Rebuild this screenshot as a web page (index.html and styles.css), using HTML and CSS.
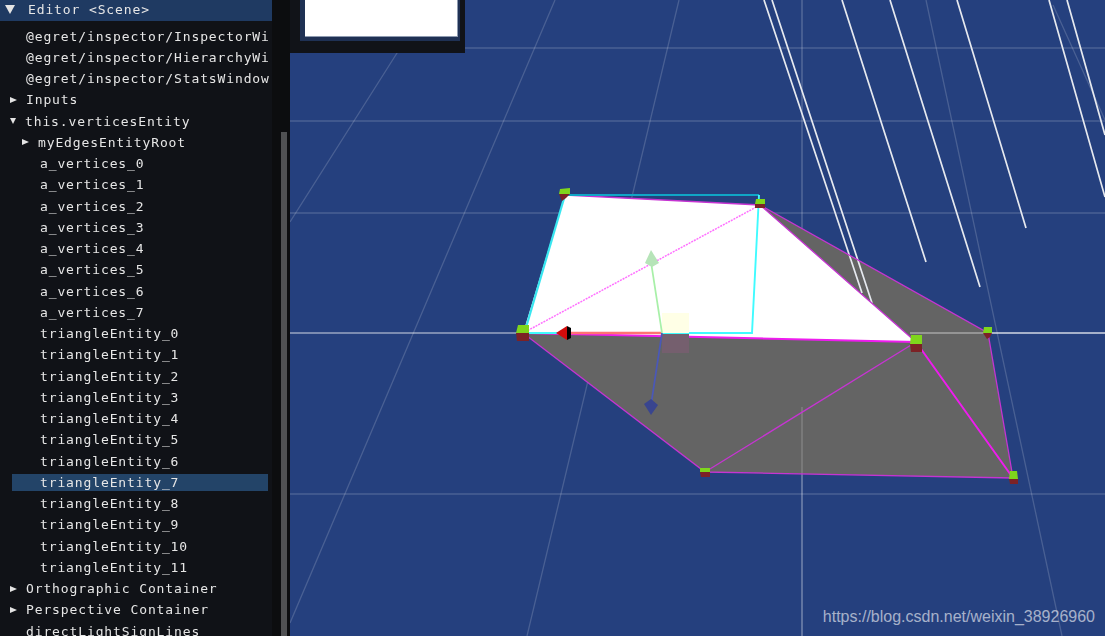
FILE: index.html
```html
<!DOCTYPE html>
<html lang="en">
<head>
<meta charset="utf-8">
<title>Editor &lt;Scene&gt;</title>
<link rel="stylesheet" href="styles.css">
</head>
<body>
<div class="app">
  <aside class="sidebar">
    <div class="tree">
      <div class="header"><i class="arrow-big"></i><span>Editor &lt;Scene&gt;</span></div>
      <div class="rows">
        <div class="row leaf1">@egret/inspector/InspectorWi</div>
        <div class="row leaf1">@egret/inspector/HierarchyWi</div>
        <div class="row leaf1">@egret/inspector/StatsWindow</div>
        <div class="row branch1"><i class="arrow-right"></i>Inputs</div>
        <div class="row branch1"><i class="arrow-down"></i>this.verticesEntity</div>
        <div class="row branch2"><i class="arrow-right"></i>myEdgesEntityRoot</div>
        <div class="row leaf2">a_vertices_0</div>
        <div class="row leaf2">a_vertices_1</div>
        <div class="row leaf2">a_vertices_2</div>
        <div class="row leaf2">a_vertices_3</div>
        <div class="row leaf2">a_vertices_4</div>
        <div class="row leaf2">a_vertices_5</div>
        <div class="row leaf2">a_vertices_6</div>
        <div class="row leaf2">a_vertices_7</div>
        <div class="row leaf2">triangleEntity_0</div>
        <div class="row leaf2">triangleEntity_1</div>
        <div class="row leaf2">triangleEntity_2</div>
        <div class="row leaf2">triangleEntity_3</div>
        <div class="row leaf2">triangleEntity_4</div>
        <div class="row leaf2">triangleEntity_5</div>
        <div class="row leaf2">triangleEntity_6</div>
        <div class="row leaf2 selected">triangleEntity_7</div>
        <div class="row leaf2">triangleEntity_8</div>
        <div class="row leaf2">triangleEntity_9</div>
        <div class="row leaf2">triangleEntity_10</div>
        <div class="row leaf2">triangleEntity_11</div>
        <div class="row branch1"><i class="arrow-right"></i>Orthographic Container</div>
        <div class="row branch1"><i class="arrow-right"></i>Perspective Container</div>
        <div class="row leaf1">directLightSignLines</div>
      </div>
    </div>
    <div class="scrollbar"><div class="thumb"></div></div>
  </aside>
  <main class="viewport">
    <svg class="scene" viewBox="290 0 815 636" aria-hidden="true">
      <g class="grid">
        <path d="M290 48H1105M290 121H1105M290 213H1105M290 494H1105"/>
        <path d="M404 42L290 222M555 0L290 623M679 0L527 636M926 0L1062 636M1053 5L1105 120"/>
      </g>
      <path class="grid-vertical" d="M802 0V636"/>
      <path class="horizon" d="M290 333H1105"/>

      <polygon class="grey" points="523,333 760,205 988,333 1013,478 705,472"/>
      <path class="grid-over" d="M802 407V636"/>
      <path class="horizon-over" d="M910 333H1105"/>
      <g class="rain">
        <path d="M764 0L862 293M772 0L872 303M842 0L926 262M890 0L980 287M957 0L1026 228M1049 0L1105 197M1067 0L1105 135"/>
      </g>
      <polygon class="white" points="523,333 565,195 760,205 916,342"/>

      <g class="edges">
        <path d="M760 205L988 333L1013 478L705 472L523 333"/>
        <path d="M916 342L705 472"/>
        <path d="M565 195L760 205L916 342"/>
      </g>
      <path class="edge-strong" d="M523 333L916 342M916 342L1013 478"/>
      <path class="edge-dotted" d="M525 332L760 205"/>
      <path class="cyan-edge" d="M525 331L565 195"/>
      <path class="teal-edge" d="M565 195H759"/>
      <path class="cyan-box" d="M759 195L752 333H525"/>

      <rect class="plane-top" x="662" y="313" width="27" height="20"/>
      <rect class="plane-bottom" x="662" y="334" width="27" height="19"/>
      <path class="axis-x" d="M568 333H662"/>
      <path class="axis-y" d="M662 333L651 262"/>
      <path class="axis-z" d="M662 333L651 405"/>
      <polygon class="cone-x" points="556,333 567,326 567,340"/>
      <polygon class="cone-x-back" points="567,326 571,328 571,338 567,340"/>
      <polygon class="cone-y" points="651,250 659,263 652,267 645,263"/>
      <polygon class="cone-z" points="651,415 658,405 651,399 644,404"/>

      <g class="cube-top">
        <polygon points="560,189 570,188 570,194 559,194"/>
        <polygon points="756,199 765,199 765,204 755,204"/>
        <polygon points="518,325 529,325 529,333 516,333"/>
        <polygon points="911,335 922,335 922,344 910,344"/>
        <polygon points="984,327 992,327 992,333 983,333"/>
        <polygon points="1010,471 1017,471 1018,479 1009,479"/>
        <polygon points="700,468 710,468 710,472 700,472"/>
      </g>
      <g class="cube-bottom">
        <polygon points="559,194 570,194 566,198 562,201"/>
        <polygon points="755,204 765,204 765,208 755,208"/>
        <polygon points="516,333 529,333 529,341 517,341"/>
        <polygon points="910,344 922,344 922,352 911,352"/>
        <polygon points="983,333 992,333 990,337 987,339"/>
        <polygon points="1009,479 1018,479 1018,484 1010,484"/>
        <polygon points="700,472 710,472 710,477 701,477"/>
      </g>
    </svg>
    <div class="preview"><div class="preview-frame"><div class="preview-image"></div></div></div>
    <div class="watermark">https://blog.csdn.net/weixin_38926960</div>
  </main>
</div>
</body>
</html>
```
FILE: styles.css
```css
* { box-sizing: border-box; }
html, body { margin: 0; height: 100%; overflow: hidden; background: #25407e; }

.app { display: flex; width: 100vw; height: 100vh; overflow: hidden; }

.sidebar {
  flex: 0 0 290px;
  display: flex;
  background: #0c0d0f;
  overflow: hidden;
  font-family: "DejaVu Sans Mono", "Liberation Mono", monospace;
  font-size: 13px;
  letter-spacing: 0.88px;
  color: #e6e6e6;
  white-space: nowrap;
}

.tree {
  flex: 0 0 278px;
  background: linear-gradient(to right, #101217 272px, #0c0d0f 272px);
  overflow: hidden;
  filter: blur(0.4px);
}

.header {
  width: 272px;
  height: 21px;
  padding: 0 0 3px 5px;
  display: flex;
  align-items: center;
  gap: 13px;
  background: #1f3a62;
}

.rows {
  display: flex;
  flex-direction: column;
  gap: 4.25px;
  padding-top: 6.5px;
}

.row { flex: 0 0 17px; height: 17px; line-height: 17px; display: flex; align-items: center; }
.leaf1 { padding-left: 26px; }
.leaf2 { padding-left: 40px; }
.branch1 { padding-left: 10px; }
.branch2 { padding-left: 22px; }
.selected {
  width: 256px;
  margin-left: 12px;
  padding-left: 28px;
  background: #234468;
}

.arrow-big, .arrow-down, .arrow-right { flex: none; width: 0; height: 0; display: block; border-style: solid; border-color: transparent; }
.arrow-big { border-width: 9px 5px 0; border-top-color: #e4e4e4; }
.arrow-down { margin-right: 9px; border-width: 6px 3.5px 0; border-top-color: #e4e4e4; }
.arrow-right { margin-right: 9px; border-width: 3.5px 0 3.5px 7px; border-left-color: #e4e4e4; }

.scrollbar {
  flex: 1;
  display: flex;
  padding: 132px 3px 0;
}
.thumb { flex: 1; background: #505153; }

.viewport { position: relative; flex: 1; min-width: 0; background: #25407e; overflow: hidden; }
.scene { display: block; width: 100%; height: 100%; filter: blur(0.6px); }

.grid path { fill: none; stroke: #fff; stroke-opacity: 0.17; stroke-width: 1.3; }
.grid-vertical { fill: none; stroke: #fff; stroke-opacity: 0.2; stroke-width: 1.6; }
.horizon { fill: none; stroke: #fff; stroke-opacity: 0.4; stroke-width: 2; }
.grid-over { fill: none; stroke: #fff; stroke-opacity: 0.18; stroke-width: 1.6; }
.horizon-over { fill: none; stroke: #fff; stroke-opacity: 0.32; stroke-width: 2; }
.grey { fill: #646464; }
.white { fill: #fff; }
.rain path { fill: none; stroke: #e6e9ef; stroke-width: 1.7; }

.edges path { fill: none; stroke: #c634d2; stroke-width: 1.3; }
.edge-strong { fill: none; stroke: #ee1cee; stroke-width: 2; }
.edge-dotted { fill: none; stroke: #ff70ff; stroke-width: 1.5; stroke-dasharray: 2 1; }
.cyan-edge { fill: none; stroke: #38e6f0; stroke-width: 2.2; }
.teal-edge { fill: none; stroke: #10a6c6; stroke-width: 2; }
.cyan-box { fill: none; stroke: #40fbff; stroke-width: 1.9; }

.plane-top { fill: #ffffe6; }
.plane-bottom { fill: #755f6e; }
.axis-x { fill: none; stroke: #ff7272; stroke-width: 2.4; }
.axis-y { fill: none; stroke: #a8f0a8; stroke-width: 1.7; }
.axis-z { fill: none; stroke: #4a58b8; stroke-width: 1.7; }
.cone-x { fill: #d20c0c; }
.cone-x-back { fill: #000; }
.cone-y { fill: #b6e4b8; }
.cone-z { fill: #39458f; }
.cube-top polygon { fill: #7fd61c; }
.cube-bottom polygon { fill: #7c2226; }

.preview {
  position: absolute;
  left: 0;
  top: 0;
  width: 175px;
  height: 53px;
  padding-left: 10px;
  background: #111318;
}
.preview-frame {
  width: 160px;
  height: 41px;
  padding: 0 2px 4px 5px;
  background: #1f3154;
}
.preview-image {
  width: 153px;
  height: 37px;
  background: #fff;
  border-bottom: 1px solid #8d9ab0;
  border-right: 1px solid #8d9ab0;
}

.watermark {
  position: absolute;
  right: 10px;
  bottom: 9px;
  font-family: "Liberation Sans", Arial, sans-serif;
  font-size: 16px;
  line-height: 20px;
  color: rgba(255, 255, 255, 0.6);
  white-space: nowrap;
}
```
